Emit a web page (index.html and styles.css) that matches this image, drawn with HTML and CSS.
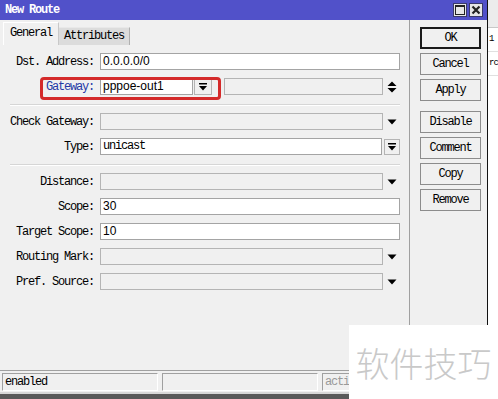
FILE: index.html
```html
<!DOCTYPE html>
<html lang="en">
<head>
<meta charset="utf-8">
<title>New Route</title>
<link rel="stylesheet" href="styles.css">
</head>
<body>
<div class="screen">
  <div class="win">
    <div class="titlebar">
      <span class="title">New Route</span>
      <div class="tb-btns">
        <span class="tb-btn"><svg width="10" height="10" viewBox="0 0 10 10"><rect x="0.5" y="0.5" width="9" height="9" fill="none" stroke="#222" stroke-width="1"/><rect x="0.5" y="0.5" width="9" height="1.5" fill="#222"/></svg></span>
        <span class="tb-btn"><svg width="10" height="10" viewBox="0 0 10 10"><path d="M1.5 1.5 L8.5 8.5 M8.5 1.5 L1.5 8.5" stroke="#222" stroke-width="2.2"/></svg></span>
      </div>
    </div>

    <div class="win-body">
      <div class="main">
        <div class="tabs">
          <span class="tab active">General</span>
          <span class="tab">Attributes</span>
        </div>

        <div class="panel">
          <div class="grp">
            <div class="row">
              <label class="lbl">Dst. Address:</label>
              <div class="fld fld-full val-sans">0.0.0.0/0</div>
            </div>
            <div class="row">
              <label class="lbl lbl-blue">Gateway:</label>
              <div class="fld fld-gw val-sans">pppoe-out1</div>
              <span class="dd-btn"><svg width="8" height="8" viewBox="0 0 8 8"><rect x="0" y="0" width="8" height="1.5" fill="#000"/><path d="M0 3 H8 L4 7.5 Z" fill="#000"/></svg></span>
              <div class="fld fld-gw2 off"></div>
              <span class="arr"><svg width="10" height="12" viewBox="0 0 10 12"><path d="M0.5 5 H9.5 L5 0.5 Z M0.5 7 H9.5 L5 11.5 Z" fill="#000"/></svg></span>
              <span class="hl"></span>
            </div>
          </div>

          <div class="sep"></div>

          <div class="grp">
            <div class="row">
              <label class="lbl">Check Gateway:</label>
              <div class="fld fld-combo off"></div>
              <span class="arr"><svg width="10" height="6" viewBox="0 0 10 6"><path d="M0.5 0.5 H9.5 L5 5.5 Z" fill="#000"/></svg></span>
            </div>
            <div class="row">
              <label class="lbl">Type:</label>
              <div class="fld fld-type">unicast</div>
              <span class="dd-btn dd-type"><svg width="8" height="8" viewBox="0 0 8 8"><rect x="0" y="0" width="8" height="1.5" fill="#000"/><path d="M0 3 H8 L4 7.5 Z" fill="#000"/></svg></span>
            </div>
          </div>

          <div class="sep"></div>

          <div class="grp">
            <div class="row">
              <label class="lbl">Distance:</label>
              <div class="fld fld-combo off"></div>
              <span class="arr"><svg width="10" height="6" viewBox="0 0 10 6"><path d="M0.5 0.5 H9.5 L5 5.5 Z" fill="#000"/></svg></span>
            </div>
            <div class="row">
              <label class="lbl">Scope:</label>
              <div class="fld fld-full val-sans">30</div>
            </div>
            <div class="row">
              <label class="lbl">Target Scope:</label>
              <div class="fld fld-full val-sans">10</div>
            </div>
            <div class="row">
              <label class="lbl">Routing Mark:</label>
              <div class="fld fld-combo off"></div>
              <span class="arr"><svg width="10" height="6" viewBox="0 0 10 6"><path d="M0.5 0.5 H9.5 L5 5.5 Z" fill="#000"/></svg></span>
            </div>
            <div class="row">
              <label class="lbl">Pref. Source:</label>
              <div class="fld fld-combo off"></div>
              <span class="arr"><svg width="10" height="6" viewBox="0 0 10 6"><path d="M0.5 0.5 H9.5 L5 5.5 Z" fill="#000"/></svg></span>
            </div>
          </div>
        </div>
      </div>

      <div class="side">
        <div class="btn-grp">
          <button class="btn btn-default">OK</button>
          <button class="btn">Cancel</button>
          <button class="btn">Apply</button>
        </div>
        <div class="btn-grp">
          <button class="btn">Disable</button>
          <button class="btn">Comment</button>
          <button class="btn">Copy</button>
          <button class="btn">Remove</button>
        </div>
      </div>
    </div>

    <div class="status">
      <span class="cell">enabled</span>
      <span class="cell"></span>
      <span class="cell cell-dim">acti</span>
    </div>
    <div class="win-bottom"></div>
  </div>

  <div class="behind">
    <div class="behind-top"></div>
    <div class="behind-row">1</div>
    <div class="behind-row">rc</div>
  </div>

  <div class="watermark">软件技巧</div>
</div>
</body>
</html>
```

FILE: styles.css
```css
:root{
  --face:#f0f0f0; --line:#a0a0a0; --title:#5151c9;
  --mono:"Liberation Mono","DejaVu Sans Mono",monospace;
  --sans:"Liberation Sans",Arial,sans-serif;
}
*{box-sizing:border-box;}
html,body{margin:0;padding:0;}
body{ width:498px; height:399px; overflow:hidden; background:#fff; font-family:var(--mono); font-size:12px; letter-spacing:-1.2px; color:#000; }

.screen{ position:relative; display:flex; width:498px; height:399px; }

/* ---- window ---- */
.win{ width:488px; height:399px; display:flex; flex-direction:column; background:var(--face); border-right:1px solid #111; }
.titlebar{ height:20px; flex-shrink:0; background:var(--title); display:flex; align-items:center; justify-content:space-between; padding:0 4px 0 5px; }
.title{ color:#fff; font-weight:700; font-size:12px; }
.tb-btns{ display:flex; gap:2px; }
.tb-btn{ width:14px; height:14px; background:#e6e6e6; border:1px solid #3a3a6a; display:flex; align-items:center; justify-content:center; }

.win-body{ flex:1; display:flex; }
.main{ width:410px; border-right:1px solid var(--line); padding-top:2px; }

.tabs{ display:flex; align-items:flex-end; height:23px; padding-left:3px; }
.tab{ height:18px; line-height:17px; padding:0 5px; background:#dcdcdc; border-right:1px solid #b0b0b0; border-top:1px solid #e8e8e8; }
.tab.active{ height:23px; line-height:21px; width:56px; padding:0 6px; background:var(--face); border-top:1px solid #fff; border-left:1px solid #fff; border-right:1px solid #c8c8c8; }

.panel{ padding-top:8px; }
.grp{ display:flex; flex-direction:column; gap:8px; }
.sep{ height:2px; margin:9px 9px 7px 10px; border-top:1px solid #d6d6d6; border-bottom:1px solid #fff; }

.row{ position:relative; display:flex; align-items:center; height:17px; }
.lbl{ width:94px; margin-right:6px; text-align:right; white-space:nowrap; }
.lbl-blue{ color:#2438a6; }

.fld{ height:17px; border:1px solid #a4a4a4; background:#fff; padding-left:2px; line-height:15px; white-space:nowrap; overflow:hidden; }
.fld.off{ background:var(--face); border-color:#b4b4b4; }
.val-sans{ font-family:var(--sans); font-size:12px; letter-spacing:0; }
.fld-full{ width:300px; }
.fld-combo{ width:283px; }
.fld-type{ width:282px; }
.fld-gw{ width:93px; }
.fld-gw2{ width:159px; margin-left:12px; }

.arr{ width:17px; height:17px; display:flex; align-items:center; justify-content:center; }
.dd-btn{ width:18px; height:16px; margin-left:1px; border:1px solid #b4b4b4; background:var(--face); display:flex; align-items:center; justify-content:center; }
.dd-btn.dd-type{ width:16px; margin-left:2px; }

.hl{ position:absolute; left:40px; top:-1px; width:181px; height:23px; border:3px solid #d42a2a; border-radius:4px; }

/* ---- buttons ---- */
.side{ flex:1; padding:7px 6px 0 10px; display:flex; flex-direction:column; gap:10px; }
.btn-grp{ display:flex; flex-direction:column; gap:4px; }
.btn{ width:61px; height:22px; padding:0; background:var(--face); border:1px solid #8c8c8c; font-family:var(--mono); font-size:12px; letter-spacing:-1.2px; color:#000; }
.btn-default{ border:2px solid #1a1a1a; }

/* ---- status bar ---- */
.status{ height:22px; flex-shrink:0; border-top:1px solid var(--line); display:flex; gap:4px; padding:2px 0 0 2px; }
.cell{ width:156px; height:18px; border:1px solid; border-color:#a0a0a0 #fff #fff #a0a0a0; padding-left:2px; line-height:16px; }
.cell-dim{ color:#9a9a9a; width:164px; }
.win-bottom{ height:7px; flex-shrink:0; border-top:2px solid #d8d8d8; background:#5a5a5a; }

/* ---- window behind ---- */
.behind{ flex:1; background:#fff; overflow:hidden; }
.behind-top{ height:28px; background:#ececec; border-bottom:1px solid #c8c8c8; }
.behind-row{ height:24px; line-height:22px; padding-left:1px; border-bottom:1px solid #e0e0e0; white-space:nowrap; font-size:9px; letter-spacing:-1px; }

.watermark{ position:absolute; left:349px; top:325px; width:149px; height:74px; background:#fff; color:#c9c9c9; font-family:"Noto Sans CJK SC",sans-serif; font-weight:300; font-size:34px; letter-spacing:0; line-height:76px; text-align:center; }
```
